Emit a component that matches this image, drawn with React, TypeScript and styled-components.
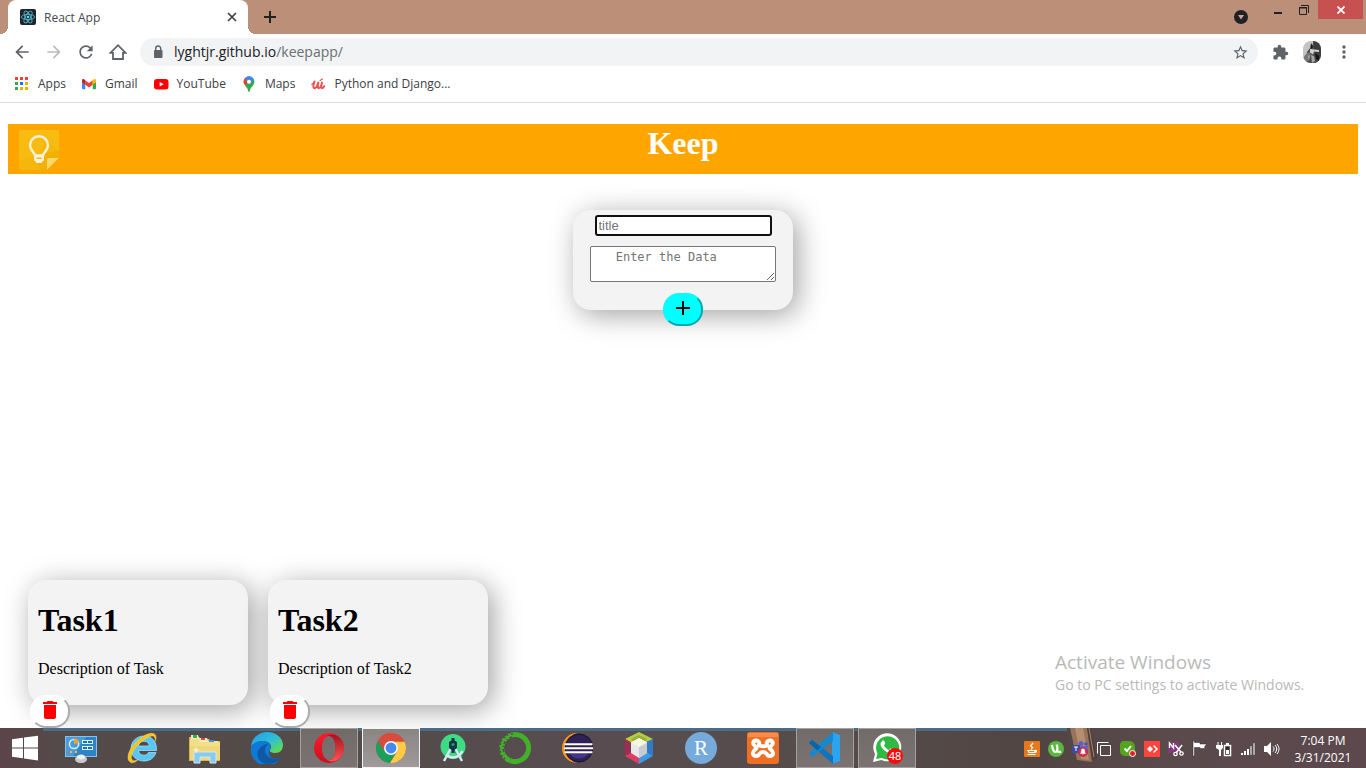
import React from "react";
import styled, { createGlobalStyle } from "styled-components";
import {
  MdAdd,
  MdArrowBack,
  MdArrowForward,
  MdDelete,
  MdExtension,
  MdMoreVert,
  MdRefresh,
  MdStarBorder,
} from "react-icons/md";

const uiFont = `"Segoe UI", "Open Sans", "Noto Sans", sans-serif`;
const serif = `"Times New Roman", "Liberation Serif", serif`;

const GlobalStyle = createGlobalStyle`
  *, *::before, *::after { box-sizing: border-box; }
  body { margin: 0; background: #fff; }
  button { font: inherit; color: inherit; padding: 0; border: 0; background: none; cursor: pointer; }
  svg { display: block; flex: none; }
`;

const Desktop = styled.div`
  display: flex;
  flex-direction: column;
  min-height: 100vh;
  font-family: ${uiFont};
`;

/* ---------- browser chrome ---------- */

const TabStrip = styled.header`
  display: flex;
  align-items: flex-start;
  height: 34px;
  padding: 0 3px 0 8px;
  background: #bc8f78;
`;

const Tab = styled.div`
  position: relative;
  display: flex;
  align-items: center;
  width: 240px;
  height: 34px;
  padding: 0 11px 0 12px;
  gap: 8px;
  border-radius: 8px 8px 0 0;
  background: #fff;
  color: #45494d;
  font-size: 12px;

  &::before,
  &::after {
    content: "";
    position: absolute;
    bottom: 0;
    width: 8px;
    height: 8px;
  }
  &::before {
    left: -8px;
    background: radial-gradient(circle at 0 0, transparent 8px, #fff 8px);
  }
  &::after {
    right: -8px;
    background: radial-gradient(circle at 100% 0, transparent 8px, #fff 8px);
  }
`;

const TabTitle = styled.span`
  flex: 1;
`;

const StripButton = styled.button`
  display: flex;
  align-items: center;
  justify-content: center;
  width: 28px;
  height: 34px;
  margin-left: 8px;
  color: #202124;
`;

const TabClose = styled.button`
  color: #3c4043;
`;

const WindowControls = styled.div`
  display: flex;
  margin-left: auto;
`;

const WindowButton = styled.button<{ $close?: boolean; $width: number; $height: number }>`
  display: flex;
  align-items: center;
  justify-content: center;
  width: ${(p) => p.$width}px;
  height: ${(p) => p.$height}px;
  background: ${(p) => (p.$close ? "#c75050" : "transparent")};
  color: #202124;
`;

const Toolbar = styled.nav`
  display: flex;
  align-items: center;
  height: 36px;
  padding: 0 6px;
`;

const ToolButton = styled.button<{ $dim?: boolean }>`
  display: flex;
  align-items: center;
  justify-content: center;
  width: 32px;
  height: 28px;
  color: ${(p) => (p.$dim ? "#babcbe" : "#5f6368")};
`;

const AddressBar = styled.div`
  display: flex;
  flex: 1;
  align-items: center;
  height: 28px;
  margin: 0 6px;
  padding: 0 9px 0 10px;
  gap: 8px;
  border-radius: 14px;
  background: #f1f3f4;
  color: #5f6368;
`;

const Address = styled.a`
  flex: 1;
  color: #6b6f73;
  font-size: 13px;
  font-size: 14px;
  line-height: 18px;
  text-decoration: none;

  b {
    color: #202124;
    font-weight: 400;
  }
`;

const Bookmarks = styled.nav`
  display: flex;
  align-items: center;
  height: 33px;
  padding: 0 14px 4px;
  gap: 15px;
  border-bottom: 1px solid #dadce0;
`;

const Bookmark = styled.a`
  display: flex;
  align-items: center;
  gap: 8px;
  color: #3c4043;
  font-size: 12px;
  line-height: 16px;
  text-decoration: none;
`;

/* ---------- keep app ---------- */

const Page = styled.main`
  position: relative;
  display: flex;
  flex: 1;
  flex-direction: column;
  padding: 21px 8px 23px;
  font-family: ${serif};
`;

const AppHeader = styled.div`
  display: grid;
  grid-template-columns: 51px 1fr 51px;
  height: 50px;
  background: orange;
  color: #fff;
`;

const AppLogo = styled.div`
  padding: 6px 0 0 11px;
`;

const AppTitle = styled.h1`
  margin: 0;
  font-size: 32px;
  line-height: 39px;
  text-align: center;
`;

const cardShadow = "5px 5px 28px rgba(0, 0, 0, 0.37)";

const NoteForm = styled.form`
  display: flex;
  flex-direction: column;
  align-items: center;
  width: 220px;
  margin: 36px auto 40px;
  padding-top: 5px;
  border-radius: 18px;
  background: #f3f3f3;
  box-shadow: ${cardShadow};
`;

const TitleInput = styled.input`
  width: 177px;
  height: 21px;
  margin-bottom: 10px;
  padding: 1px 2px;
  border: 2px solid #101010;
  border-radius: 3px;
  outline: 0;
  background: #fff;
  font: 13px "Liberation Sans", Arial, sans-serif;
`;

const DataInput = styled.textarea`
  width: 186px;
  height: 36px;
  margin: 0 0 11px;
  padding: 3px;
  border: 1px solid #767676;
  border-radius: 2px;
  background: #fff;
  font: 12px/15px "DejaVu Sans Mono", monospace;
`;

const RoundButton = styled.button<{ $tone: string }>`
  display: flex;
  align-items: center;
  justify-content: center;
  width: 40px;
  height: 33px;
  padding-bottom: 3px;
  border: 2px outset ${(p) => p.$tone};
  border-radius: 16px;
  background: ${(p) => p.$tone};
`;

const AddButton = styled(RoundButton)`
  margin-bottom: -16px;
  color: #000;
`;

const DeleteButton = styled(RoundButton)`
  margin: 0 0 -23px -8px;
  color: red;
`;

const TaskList = styled.section`
  display: flex;
  flex-wrap: wrap;
  gap: 20px;
  margin: auto 20px 0;
`;

const TaskCard = styled.article`
  width: 220px;
  padding: 0 10px;
  border-radius: 18px;
  background: #f3f3f3;
  box-shadow: ${cardShadow};
`;

const TaskTitle = styled.h1`
  margin: 0;
  padding: 22px 0 21px;
  font-size: 32px;
  line-height: 37px;
`;

const TaskText = styled.p`
  margin: 0 0 17px;
  font-size: 16px;
  line-height: 18px;
`;

const Watermark = styled.aside`
  position: absolute;
  right: 56px;
  bottom: 33px;
  width: 255px;
  color: #b9b9b9;
  font: 14px/20px ${uiFont};
  white-space: nowrap;
`;

const WatermarkTitle = styled.div`
  font-size: 19px;
  line-height: 26px;
`;

/* ---------- taskbar ---------- */

const Taskbar = styled.footer`
  position: relative;
  display: flex;
  height: 40px;
  background: linear-gradient(90deg, #5b454b 0, #554a4a 60px, #534b49 300px, #584c50 600px, #554c4b 820px, #514543 1040px, #5a4a4c 1160px, #5c484d 100%);
`;

const TaskbarEdge = styled.div`
  position: absolute;
  top: 0;
  left: 43px;
  right: 299px;
  height: 3px;
  background: #4b6c85;
`;

const WallpaperDetail = styled.div`
  position: absolute;
  top: 0;
  right: 262px;
`;

const StartButton = styled.button`
  display: flex;
  align-items: center;
  justify-content: center;
  width: 50px;
  margin-right: 2px;
`;

const Apps = styled.div`
  position: relative;
  display: flex;
  gap: 4px;
`;

const AppButton = styled.button<{ $state?: "open" | "active" }>`
  display: flex;
  align-items: center;
  justify-content: center;
  width: 58px;
  height: 40px;
  border: 1px solid
    ${(p) => (p.$state === "active" ? "#f4f4f4" : p.$state === "open" ? "#a5a1a0" : "transparent")};
  background: ${(p) =>
    p.$state === "active"
      ? "linear-gradient(#898583, #a09a9b)"
      : p.$state === "open"
        ? "linear-gradient(#706b69, #7b7373)"
        : "none"};
`;

const Tray = styled.div`
  position: relative;
  display: flex;
  align-items: center;
  gap: 8px;
  margin-left: auto;
  padding-top: 2px;
`;

const Clock = styled.time`
  position: relative;
  width: 86px;
  padding-top: 4px;
  color: #fff;
  font-size: 12px;
  line-height: 17px;
  text-align: center;
`;

/* ---------- drawings ---------- */

const ReactLogo = () => (
  <svg width="16" height="16" viewBox="0 0 16 16">
    <rect width="16" height="16" rx="2" fill="#20232a" />
    <g fill="none" stroke="#4fb3cc" strokeWidth="0.9">
      <ellipse cx="8" cy="8" rx="6.6" ry="2.6" />
      <ellipse cx="8" cy="8" rx="6.6" ry="2.6" transform="rotate(60 8 8)" />
      <ellipse cx="8" cy="8" rx="6.6" ry="2.6" transform="rotate(120 8 8)" />
    </g>
    <circle cx="8" cy="8" r="1.3" fill="#61dafb" />
  </svg>
);

const Lock = () => (
  <svg width="16" height="16" viewBox="0 0 16 16">
    <rect x="4" y="6" width="8.500" height="8" rx="1" fill="currentColor" />
    <path d="M5.700 6.500V4.500a2.500 2.500 0 0 1 5 0v2" fill="none" stroke="currentColor" strokeWidth="1.400" />
  </svg>
);

const AppsGrid = () => {
  const colors = ["#ea4335", "#ea4335", "#ea4335", "#34a853", "#1a73e8", "#fbab06", "#34a853", "#f9ab00", "#f9ab00"];
  return (
    <svg width="16" height="16" viewBox="0 0 16 16">
      {colors.map((c, i) => (
        <rect key={i} x={1 + (i % 3) * 5} y={1 + Math.floor(i / 3) * 5} width="3" height="3" fill={c} />
      ))}
    </svg>
  );
};

const Gmail = () => (
  <svg width="16" height="16" viewBox="0 0 16 16">
    <path d="M1 4v8.200a1 1 0 0 0 1 1h2.300V7.500z" fill="#4285f4" />
    <path d="M15 4v8.200a1 1 0 0 1-1 1h-2.300V7.500z" fill="#34a853" />
    <path d="M4.300 4.200v4.500L8 11.400l3.700-2.700V4.200L8 7z" fill="#ea4335" />
    <path d="M1 4.300v1.900l3.300 2.500V4.200l-.9-.7C2.400 2.700 1 3.200 1 4.300z" fill="#c5221f" />
    <path d="M15 4.300v1.900l-3.300 2.500V4.200l.9-.7c1-.8 2.400-.3 2.400.8z" fill="#fbbc04" />
  </svg>
);

const YouTube = () => (
  <svg width="16" height="16" viewBox="0 0 16 16">
    <rect x="1" y="3" width="14.500" height="10.500" rx="3" fill="#f00" />
    <path d="M6.700 6v4.500l4-2.200z" fill="#fff" />
  </svg>
);

const Maps = () => (
  <svg width="16" height="16" viewBox="0 0 16 16">
    <clipPath id="pin">
      <path d="M8 .3a5.400 5.400 0 0 0-5.400 5.500c0 3.600 3.900 5 4.600 9.200.1.700.3.900.8.900s.7-.2.8-.9c.7-4.200 4.600-5.600 4.600-9.200A5.400 5.400 0 0 0 8 .3z" />
    </clipPath>
    <g clipPath="url(#pin)">
      <path d="M0 0h16v16H0z" fill="#34a853" />
      <path d="M0 13 9 3 4 0H0z" fill="#fbbc04" />
      <path d="M0 0h5l3 5.700L4.500 9 0 6z" fill="#ea4335" />
      <path d="M4.500 0H13l1 2-6 6L4.500 3.500z" fill="#4285f4" />
    </g>
    <circle cx="8" cy="5.700" r="2" fill="#fff" />
  </svg>
);

const Udemy = () => (
  <svg width="16" height="16" viewBox="0 0 16 16" fill="none" stroke="#eb5252" strokeLinecap="round">
    <path d="M4.500 5.500C3.300 8.500 2.800 12.300 4.500 12.300c1.800 0 3.200-3.300 4-6.500-.8 3.200-1 6.400.3 6.400 1.200 0 1.900-1.400 2.400-2.700M12 6.500c-.8 3-1.200 5.700 0 5.700.9 0 1.700-.9 2.200-2" strokeWidth="2" />
    <path d="M1.800 8.500c1-.8 2-1.900 2.700-3M10 4.500l2.500-1.500" strokeWidth="1.200" />
  </svg>
);

const Avatar = () => (
  <svg width="18" height="22" viewBox="0 0 18 22">
    <clipPath id="face">
      <rect width="18" height="22" rx="8" />
    </clipPath>
    <g clipPath="url(#face)">
      <path d="M0 0h18v22H0z" fill="#c4c4c4" />
      <path d="M10 0h8v22h-7z" fill="#3c3c3e" />
      <path d="M4 11 7 7 8 2l3 3v5l3 4 1 8H3z" fill="#4a4848" />
      <path d="M3 13 6 11l2 2-2 6-3 3H0v-5z" fill="#777" />
      <path d="m7 8 9 1v2l-5-.5-1 3-3-2z" fill="#d5d1d1" />
      <path d="m8 14 3 1 1 5-3 2zM5 15l2-1-1 6z" fill="#a9a6a6" />
      <path d="M8 3l2 3-2 2zM12 12l4 3v5l-3-2z" fill="#151515" />
    </g>
  </svg>
);

const KeepLogo = () => (
  <svg width="40" height="40" viewBox="0 0 40 40">
    <rect width="40" height="40" rx="2" fill="#f6b70c" />
    <path d="m27 9 13 13v18H20V28z" fill="#f1b100" />
    <path d="M0 0h40v20L0 30z" fill="#f8c01a" opacity=".45" />
    <path d="M16 25.500c0-3-5-4.500-5-10.200a9 9 0 0 1 18 0c0 5.700-5 7.200-5 10.200z" fill="none" stroke="#fbf1d8" strokeWidth="2.400" />
    <path d="M15 25h10v4.500a2 2 0 0 1-2 2V33h-6v-1.500a2 2 0 0 1-2-2z" fill="#fbf1d8" />
    <path d="M17.500 28.200h5" stroke="#f2b507" strokeWidth="1.400" />
    <path d="M40 28 28 40V30a2 2 0 0 1 2-2z" fill="#fcd76c" />
    <path d="M40 28v12H28z" fill="#ffa500" />
  </svg>
);

const WindowsLogo = () => (
  <svg width="28" height="28" viewBox="0 0 28 28" fill="#fff">
    <path d="M1 5.200 12 3.800v9.700H1zM13 3.600 27 1.800v11.700H13zM1 14.500h11v9.700L1 22.800zM13 14.500h14v12l-14-2z" />
  </svg>
);

const ControlPanel = () => (
  <svg width="32" height="32" viewBox="0 0 32 32">
    <path d="M0 4h32v21H0z" fill="#7fc3ee" />
    <path d="M1 5h30v19H1z" fill="#2f83c5" />
    <path d="M1 5h20L8 24H1z" fill="#4a9bd6" />
    <circle cx="9" cy="12" r="4.600" fill="none" stroke="#d6effd" strokeWidth="1.500" />
    <path d="M9 6.500V12l5-1.500a5 5 0 0 0-5-4z" fill="#f9a12e" />
    <path d="M17 8h11v4H17zM17 14h11v4H17z" fill="#d9f2ff" />
    <path d="M18 9h4v2h-4zM23 15h4v2h-4zM23 9h4v2h-4zM18 15h4v2h-4z" fill="#1d70af" />
    <path d="M5 19h2v2H5zM10 19h2v2h-2z" fill="#ffb347" />
    <path d="M10 27c0-2 3-3 6-3s6 1 6 3-2 4-6 4-6-2-6-4z" fill="#c9c9cc" />
    <ellipse cx="16" cy="25" rx="4" ry="2.500" fill="#eee" />
  </svg>
);

const InternetExplorer = () => (
  <svg width="32" height="32" viewBox="0 0 32 32">
    <path d="M29 20.500C27 26.500 22.500 29 17 29 9.500 29 4 24 4 16.800 4 9.500 9.500 4 17 4s13 5 12.500 14.500H11.500c.3 3 2.500 4.700 5.500 4.700 2 0 3.400-.9 4.300-2.700zM11.500 14h10.800c-.2-3-2.300-4.800-5.300-4.800s-5.200 1.800-5.500 4.800z" fill="#59c6f6" stroke="#a8e6ff" strokeWidth=".7" fillRule="evenodd" />
    <path d="M3 30C-3 25 5 11 16 4.500c6-4 14-5 13 2-.2 1.300-.6 2.500-1 3.200 1-6-2-7-7-4.200C10.500 10.500 1 24 5.500 28.200c1.300 1.100 3.500.5 5.500-.6C8 31 4.800 31.500 3 30z" fill="#f7c321" stroke="#fbe173" strokeWidth=".4" />
  </svg>
);

const Explorer = () => (
  <svg width="34" height="32" viewBox="0 0 34 32">
    <path d="M1 5h10l2 2h8l2 2h9v20H1z" fill="#d8b34e" />
    <path d="M3 3h7l1 3h8l1 3h10v6H3z" fill="#f6ecc0" />
    <path d="M5 3h4v3H5z" fill="#31b04b" />
    <path d="M13 6h4v2h-4z" fill="#dc4b37" />
    <path d="M21 8h5v2h-5z" fill="#3893dd" />
    <path d="M2 7h9l1 3h20v18H2z" fill="#f4df88" />
    <path d="M2 14h30v14H2z" fill="#edd477" opacity=".8" />
    <path d="M6 31V20h22v11h-6v-6H12v6z" fill="#8acbed" stroke="#c9ecfb" strokeWidth="1" />
    <path d="m8 14 .7 3.300L12 18l-3.300.7L8 22l-.7-3.300L4 18l3.300-.7z" fill="#fff" opacity=".85" />
  </svg>
);

const Edge = () => (
  <svg width="32" height="32" viewBox="0 0 32 32">
    <defs>
      <linearGradient id="edge-top" x1="0" y1="0" x2="1" y2="1">
        <stop offset="0" stopColor="#229ee6" />
        <stop offset=".5" stopColor="#2fbcd9" />
        <stop offset="1" stopColor="#6be52f" />
      </linearGradient>
    </defs>
    <path d="M0 15A16 16 0 0 1 16 0c9 0 16 6 16 13 0 5-3 8-8 8-4 0-6-1.500-5-3 3-4-.5-9-7-9C6 9 1 12 0 15z" fill="url(#edge-top)" />
    <path d="M0 15C1 11.500 6 9 12 9c5 0 8.500 3.500 7.500 7-.8 1.600-1.500 3.300-1.500 5 0 5.500 7 8 12 4A16 16 0 0 1 0 15z" fill="#0d7bd6" />
    <path d="M12 31C2 25 6 13 18 11.500c-8 6-3 15.500 7 15.300 2 0 4-.8 5.300-1.600C25 31.600 18 33 12 31z" fill="#0f59a4" />
  </svg>
);

const Opera = () => (
  <svg width="32" height="32" viewBox="0 0 32 32">
    <defs>
      <linearGradient id="opera-ring" x1="0" y1="0" x2="0" y2="1">
        <stop offset="0" stopColor="#ff1b2d" />
        <stop offset="1" stopColor="#c8101e" />
      </linearGradient>
      <linearGradient id="opera-side" x1="0" y1="0" x2="0" y2="1">
        <stop offset="0" stopColor="#a5121c" />
        <stop offset="1" stopColor="#ff5455" />
      </linearGradient>
    </defs>
    <path d="M16 1a15 15 0 1 0 0 30 15 15 0 0 0 0-30zm0 3c4 0 6.500 5 6.500 12S20 28 16 28 9 23 9 16 12 4 16 4z" fill="url(#opera-ring)" fillRule="evenodd" />
    <path d="M11 6c8-8 20-1 20 10S19 34 11 26c2 2 4 2.500 5.500 2 4-.5 6-5 6-12S20 4 16 4c-2 0-4 .6-5 2z" fill="url(#opera-side)" />
  </svg>
);

const Chrome = () => (
  <svg width="32" height="32" viewBox="0 0 32 32">
    <circle cx="16" cy="16" r="15" fill="#d94c3d" />
    <path d="M3 8.500A15 15 0 0 0 15 31l7-12-6-3-6.500 3z" fill="#1b9f5b" />
    <path d="M29.500 9.500A15 15 0 0 1 15 31l7.500-12L16 9.500z" fill="#fdcb45" />
    <path d="M3 8.500A15 15 0 0 1 29.500 9.500H16L9.500 19z" fill="#d94c3d" />
    <circle cx="16" cy="16" r="7" fill="#f4f4f4" />
    <circle cx="16" cy="16" r="5.400" fill="#4688f1" />
  </svg>
);

const AndroidStudio = () => (
  <svg width="32" height="32" viewBox="0 0 32 32">
    <circle cx="16" cy="14.500" r="12.500" fill="#3ddc84" />
    <path d="M16 14 26 24l-3 3-8-9z" fill="#2fae69" />
    <path d="M14 16 7 29M18 16l7 13M10 23.500c4 2.700 8 2.700 12 0M22.500 23l3-4" fill="none" stroke="#d5e8f6" strokeWidth="2.500" />
    <path d="M14.500 6h3v3h-3zM12 10l4-2.500 4 2.500v6l-2.500 2v3h-3v-3L12 16z" fill="#10364a" />
    <circle cx="16" cy="12.500" r="1.500" fill="#2f9a67" />
  </svg>
);

const Anaconda = () => (
  <svg width="32" height="32" viewBox="0 0 32 32" fill="none" stroke="#43b02a">
    <path d="M16 2.500a13.500 13.500 0 1 1-5 26" strokeWidth="5" />
    <path d="M16 2.500A13.500 13.500 0 0 0 11 28.500" strokeWidth="5" />
    <path d="M14 2A14 14 0 0 0 6 27" stroke="#554e4b" strokeWidth="1.600" strokeDasharray="2 3 1 2" />
    <path d="M13 5A11 11 0 0 0 6 22" stroke="#554e4b" strokeWidth="1.600" strokeDasharray="3 2 1 2" />
    <path d="M11 .8A16 16 0 0 0 3 25" stroke="#554e4b" strokeWidth="1.600" strokeDasharray="1 2 3 2" />
  </svg>
);

const Eclipse = () => (
  <svg width="32" height="32" viewBox="0 0 32 32">
    <path d="M16 1A15 15 0 1 0 16 31C3 27 3 5 16 1z" fill="#f7941e" />
    <circle cx="18" cy="16" r="14" fill="#2c2255" stroke="#15112e" />
    <path d="M8 20a11 11 0 0 0 20 0z" fill="#43358a" />
    <path d="M3.500 11.200h28v2h-28zM3 15.200h29v2H3zM3.500 19.200h28v2h-28z" fill="#fff" />
  </svg>
);

const NetBeans = () => (
  <svg width="32" height="32" viewBox="0 0 32 32">
    <path d="m16 0 14 7-14 8L2 7z" fill="#b5cf3c" />
    <path d="m16 3 8 4-8 8-8-8z" fill="#98ae3a" />
    <path d="M2 7v17l5-3V10z" fill="#a42a50" />
    <path d="M30 7v17l-7-3V10z" fill="#3279c6" />
    <path d="m2 24 14 8V26l-7-6z" fill="#dc3e66" />
    <path d="m30 24-14 8V26l7-6z" fill="#3f99e5" />
    <path d="m16 6 8 4.500V21l-8 5-8-5V10.500z" fill="#e9e9ec" />
    <path d="m16 15 8-4.500V21l-8 5z" fill="#c8cbd0" />
    <path d="m8 10.500 8 4.500 8-4.500L16 6z" fill="#f5f6df" />
  </svg>
);

const RStudio = () => (
  <svg width="32" height="32" viewBox="0 0 32 32">
    <circle cx="16" cy="16" r="16" fill="#75aadb" />
    <text x="16" y="23" textAnchor="middle" fill="#fff" fontFamily="'Liberation Serif', serif" fontSize="21">R</text>
  </svg>
);

const Xampp = () => (
  <svg width="32" height="32" viewBox="0 0 32 32">
    <rect width="32" height="32" rx="3" fill="#ef7024" />
    <path d="M1 1h30v4H1z" fill="#f69a63" opacity=".7" />
    <g fill="none" stroke="#fff" strokeWidth="4" strokeLinecap="round" strokeLinejoin="round">
      <path d="M12 13c1-3-1-5-3.500-4.500C6 9 5.500 12 7.500 13.500c1 .8 2 1.500 2 2.500 0 1.300-3.500 2.200-3.500 5 0 3 3.500 4 5.500 2 1-1 1.500-3 4.500-3s3.500 2 4.500 3c2 2 5.500 1 5.500-2 0-2.800-3.500-3.700-3.500-5 0-1 1-1.700 2-2.500C26.500 12 26 9 23.500 8.500 21 8 19 10 20 13" />
      <path d="M12 13.500c2.500 1 5.500 1 8 0" />
    </g>
  </svg>
);

const VSCode = () => (
  <svg width="34" height="32" viewBox="0 0 34 32">
    <path d="m24 0 8 3v26l-8 3z" fill="#2ba3ef" />
    <path d="M1 11 4 8l21 16v8z" fill="#0c75bd" />
    <path d="M1 21 25 0v9L4 25z" fill="#1688cd" />
    <path d="M1 11 4 8l9 7-3.500 3.500z" fill="#0766a8" />
  </svg>
);

const WhatsApp = () => (
  <svg width="32" height="32" viewBox="0 0 32 32">
    <path d="M2 30 4 22A14 14 0 1 1 10.500 28z" fill="#fff" />
    <path d="m5 27 1.500-5.500A11.600 11.600 0 1 1 11 26z" fill="#2eb943" />
    <path d="M11 9c1-1.200 2-.7 2.500.5l.8 2-1.300 1.800c1 2.200 2.800 3.800 5 4.700l1.500-1.800 3 1.500c.6 1.500-1.500 3.600-3.700 3.400C14 20.500 9 14.500 9.500 11.500z" fill="#fff" />
    <circle cx="24" cy="24" r="8" fill="#f50d0d" />
    <text x="24" y="28" textAnchor="middle" fill="#fff" fontFamily="'Noto Sans', sans-serif" fontSize="11">48</text>
  </svg>
);

const Plank = () => (
  <svg width="36" height="40" viewBox="0 0 36 40">
    <path d="m2 0 7 32 15 2L19 0z" fill="#97735a" />
    <path d="m7 0 6 31 8 1L15 0z" fill="#b58e72" />
    <path d="m19 0 5 32 5-2L22 0z" fill="#4a3b38" opacity=".7" />
    <path d="m21 0 5 29" stroke="#a98469" />
  </svg>
);

const trayIcons: [string, React.ReactNode][] = [
  ["Java", <g><rect width="16" height="16" rx="1" fill="#e6781e" /><path d="M4 9.500h7v2H5zM3.500 13.500h8M9 2 6.500 5l2 1.500L7 8.500M11 9.500c2-.5 2 1.500 0 2" fill="none" stroke="#fff" strokeWidth="1.200" /></g>],
  ["uTorrent", <g><circle cx="8" cy="8" r="8" fill="#59b83d" /><path d="M4 4c.5 3 .8 7 3.500 7C9.700 11 9.800 8 8.800 3.500M9 8.500c.5 2.300 1.800 3.300 4 2" fill="none" stroke="#fff" strokeWidth="2.200" /></g>],
  ["Teams", <g><circle cx="9" cy="2.500" r="2.500" fill="#5862c7" /><circle cx="14" cy="3" r="1.800" fill="#4b53bc" /><path d="M6 5h10v6l-3 3H7z" fill="#6067cc" /><rect y="4" width="8" height="8" fill="#3f47a5" /><path d="M2 6h4M4 6v4" stroke="#fff" /><circle cx="11" cy="11" r="5" fill="#c4314b" /><path d="M8.500 12.500 9.300 11V9.500a1.700 1.700 0 0 1 3.400 0V11l.8 1.500zM10.300 13.500h1.400" fill="#fff" stroke="#fff" strokeWidth=".4" /></g>],
  ["Windows", <path d="M4.500 4.500h10v10h-10zM1.500 12.500v-11h11" fill="none" stroke="#fff" />],
  ["Security", <g><path d="M4 0h5c4 0 6 3 6 6v4c0 4-2 5-5 5H6c-4 0-6-2-6-6V5c0-3 1-5 4-5z" fill="#55a51c" /><path d="m4.500 7.500 2.500 2.500L11 5" fill="none" stroke="#fff" strokeWidth="2" /><circle cx="12.500" cy="12.500" r="3" fill="#eb1b22" stroke="#fff" /></g>],
  ["AnyDesk", <g><rect width="16" height="16" fill="#fb443c" /><path d="m6 5 3 3-3 3-3-3zM9 5l1-1 4 4-4 4-1-1 3-3z" fill="#fff" /></g>],
  ["OneNote clipper", <g><rect y="1" width="11" height="11" fill="#80397b" /><path d="M1.500 7V2l4 5V2" fill="none" stroke="#fff" strokeWidth="1.400" /><path d="m7 4 6 7M14 4l-6 8" stroke="#fff" strokeWidth="1.500" /><circle cx="7.500" cy="13" r="1.700" fill="none" stroke="#fff" strokeWidth="1.300" /><circle cx="13.500" cy="12.500" r="1.700" fill="none" stroke="#fff" strokeWidth="1.300" /></g>],
  ["Action Center", <path d="M1 0h1.500v1.500H8V3h6.500l-2 3 1 1.500H8V6.500H2.500V15H1z" fill="#fff" stroke="#2b2424" strokeWidth=".5" />],
  ["Power", <g><path d="M1.500 1h1v3h-1zM5 1h1v3H5zM0 4h7v3L5 9v6H3V9L0 7z" fill="#fff" /><rect x="8.500" y="4.500" width="6" height="10" fill="#302929" stroke="#fff" strokeWidth="1.500" /><path d="M10 2h3v2h-3zM10 9h3v4h-3z" fill="#fff" /></g>],
  ["Network", <g><path d="M1 12h2v2H1zM4 10h2v4H4zM7 8h2v6H7z" fill="#fff" /><path d="M10.500 5.500h1v8h-1zM13.500 2.500h1v11h-1z" fill="#aaa" stroke="#aaa" /></g>],
  ["Volume", <g><path d="M0 5h3l4-4v14l-4-4H0z" fill="#fff" /><path d="M9 5.500c1.400 1.500 1.400 3.500 0 5M11 4c2.300 2.500 2.300 5.500 0 8M13 3c2.600 3 2.600 7 0 10" fill="none" stroke="#fff" strokeWidth="1" /></g>],
];

/* ---------- data ---------- */

const bookmarks = [
  { label: "Apps", icon: <AppsGrid /> },
  { label: "Gmail", icon: <Gmail /> },
  { label: "YouTube", icon: <YouTube /> },
  { label: "Maps", icon: <Maps /> },
  { label: "Python and Django...", icon: <Udemy /> },
];

const tasks = [
  { title: "Task1", text: "Description of Task" },
  { title: "Task2", text: "Description of Task2" },
];

const apps: { name: string; icon: React.ReactNode; state?: "open" | "active" }[] = [
  { name: "Control Panel", icon: <ControlPanel /> },
  { name: "Internet Explorer", icon: <InternetExplorer /> },
  { name: "File Explorer", icon: <Explorer /> },
  { name: "Edge", icon: <Edge /> },
  { name: "Opera", icon: <Opera />, state: "open" },
  { name: "Chrome", icon: <Chrome />, state: "active" },
  { name: "Android Studio", icon: <AndroidStudio /> },
  { name: "Anaconda", icon: <Anaconda /> },
  { name: "Eclipse", icon: <Eclipse /> },
  { name: "NetBeans", icon: <NetBeans /> },
  { name: "RStudio", icon: <RStudio /> },
  { name: "XAMPP", icon: <Xampp /> },
  { name: "Visual Studio Code", icon: <VSCode />, state: "open" },
  { name: "WhatsApp", icon: <WhatsApp />, state: "open" },
];

export default function App() {
  return (
    <Desktop>
      <GlobalStyle />
      <TabStrip>
        <Tab>
          <ReactLogo />
          <TabTitle>React App</TabTitle>
          <TabClose aria-label="Close tab">
            <svg width="10" height="10" viewBox="0 0 10 10" stroke="currentColor" strokeWidth="1.700"><path d="m1 1 8 8M9 1 1 9" /></svg>
          </TabClose>
        </Tab>
        <StripButton aria-label="New tab">
          <svg width="12" height="12" viewBox="0 0 12 12" stroke="currentColor" strokeWidth="2">
            <path d="M6 0v12M0 6h12" />
          </svg>
        </StripButton>
        <WindowControls>
          <WindowButton $width={50} $height={34} aria-label="Search tabs">
            <svg width="14" height="14" viewBox="0 0 14 14">
              <circle cx="7" cy="7" r="7" fill="#202124" />
              <path d="M4 5h6L7 9.500z" fill="#cfa38c" />
            </svg>
          </WindowButton>
          <WindowButton $width={24} $height={19} aria-label="Minimize">
            <svg width="10" height="10" viewBox="0 0 10 10"><path d="M1 7h8v2H1z" fill="currentColor" /></svg>
          </WindowButton>
          <WindowButton $width={28} $height={19} aria-label="Restore">
            <svg width="10" height="10" viewBox="0 0 10 10" fill="none" stroke="currentColor">
              <path d="M.5 3h7v6.500h-7zM0 2.500h8M2 .5h7.500V8" />
            </svg>
          </WindowButton>
          <WindowButton $close $width={45} $height={19} aria-label="Close window">
            <svg width="8" height="8" viewBox="0 0 8 8" stroke="#fff" strokeWidth="1.800"><path d="m.5.5 7 7M7.500.5l-7 7" /></svg>
          </WindowButton>
        </WindowControls>
      </TabStrip>

      <Toolbar aria-label="Browser">
        <ToolButton aria-label="Back"><MdArrowBack size={20} /></ToolButton>
        <ToolButton $dim aria-label="Forward"><MdArrowForward size={20} /></ToolButton>
        <ToolButton aria-label="Reload"><MdRefresh size={20} /></ToolButton>
        <ToolButton aria-label="Home">
          <svg width="18" height="18" viewBox="0 0 18 18" fill="none" stroke="currentColor" strokeWidth="1.800">
            <path d="M1.500 9.800H4V16h10V9.800h2.500L9 2.200z" />
          </svg>
        </ToolButton>
        <AddressBar>
          <Lock />
          <Address href="#address"><b>lyghtjr.github.io</b>/keepapp/</Address>
          <MdStarBorder size={17} />
        </AddressBar>
        <ToolButton aria-label="Extensions"><MdExtension size={17} /></ToolButton>
        <ToolButton aria-label="Profile"><Avatar /></ToolButton>
        <ToolButton aria-label="Menu"><MdMoreVert size={20} /></ToolButton>
      </Toolbar>

      <Bookmarks aria-label="Bookmarks">
        {bookmarks.map((b) => (
          <Bookmark key={b.label} href="#bookmark">{b.icon}{b.label}</Bookmark>
        ))}
      </Bookmarks>

      <Page>
        <AppHeader>
          <AppLogo><KeepLogo /></AppLogo>
          <AppTitle>Keep</AppTitle>
        </AppHeader>

        <NoteForm onSubmit={(e) => e.preventDefault()}>
          <TitleInput aria-label="Title" placeholder="title" />
          <DataInput aria-label="Data" placeholder="   Enter the Data" />
          <AddButton $tone="aqua" aria-label="Add note"><MdAdd size={24} /></AddButton>
        </NoteForm>

        <TaskList>
          {tasks.map((t) => (
            <TaskCard key={t.title}>
              <TaskTitle>{t.title}</TaskTitle>
              <TaskText>{t.text}</TaskText>
              <DeleteButton $tone="white" aria-label={`Delete ${t.title}`}><MdDelete size={24} /></DeleteButton>
            </TaskCard>
          ))}
        </TaskList>

        <Watermark>
          <WatermarkTitle>Activate Windows</WatermarkTitle>
          Go to PC settings to activate Windows.
        </Watermark>
      </Page>

      <Taskbar>
        <TaskbarEdge />
        <WallpaperDetail><Plank /></WallpaperDetail>
        <StartButton aria-label="Start"><WindowsLogo /></StartButton>
        <Apps>
          {apps.map((a) => (
            <AppButton key={a.name} $state={a.state} aria-label={a.name}>{a.icon}</AppButton>
          ))}
        </Apps>
        <Tray>
          {trayIcons.map(([name, icon]) => (
            <svg key={name} width="16" height="16" viewBox="0 0 16 16" role="img" aria-label={name}>{icon}</svg>
          ))}
        </Tray>
        <Clock>7:04 PM<br />3/31/2021</Clock>
      </Taskbar>
    </Desktop>
  );
}
